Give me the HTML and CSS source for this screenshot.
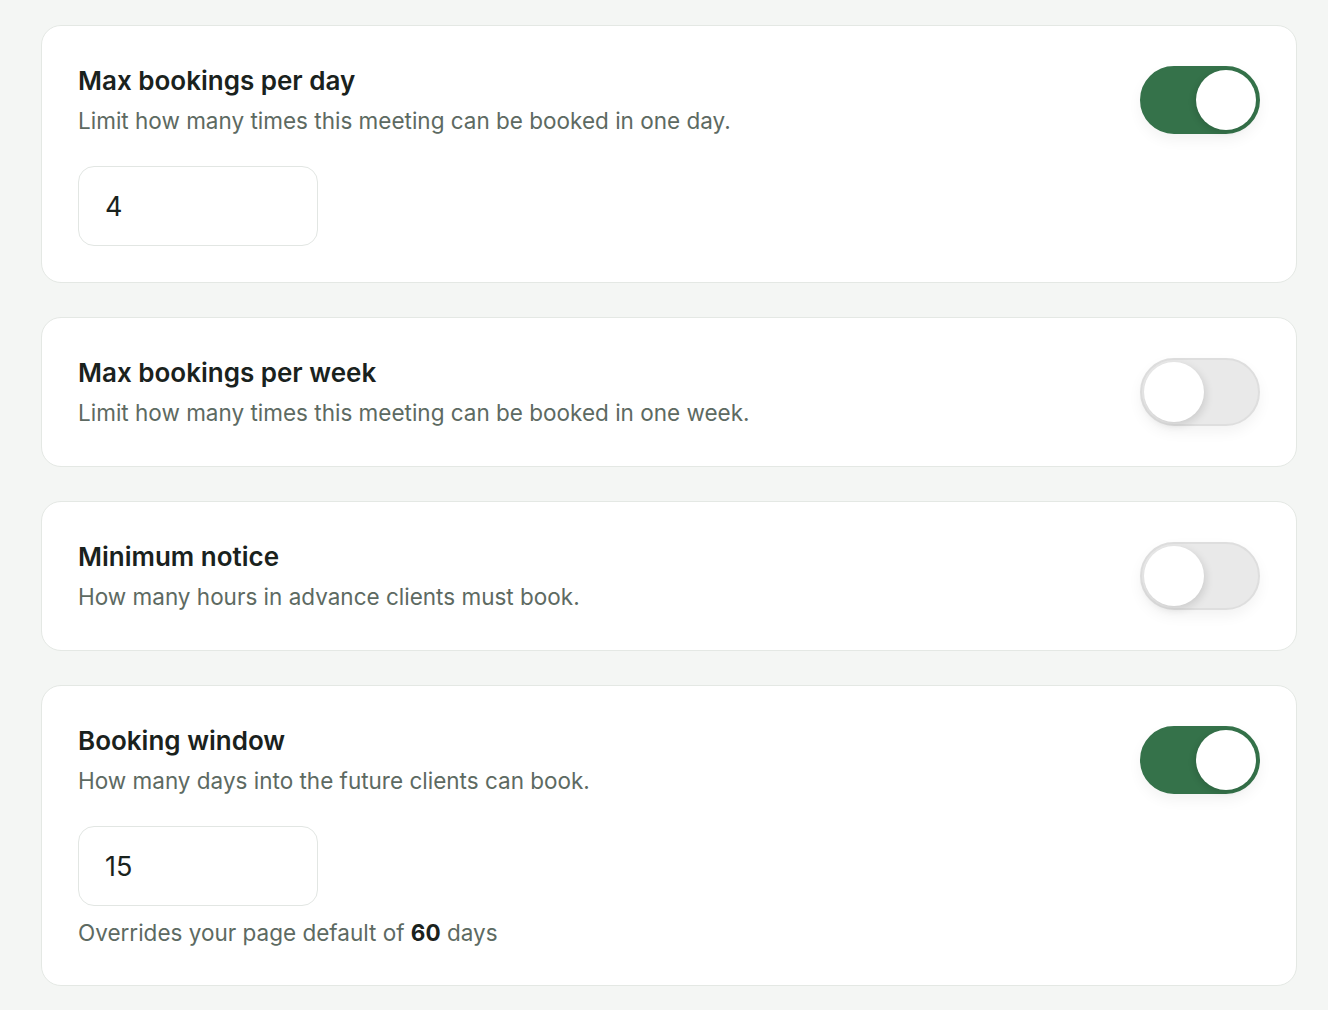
FILE: index.html
```html
<!DOCTYPE html>
<html>

<head>
    <meta charset="utf-8">
    <meta name="viewport" content="width=device-width, initial-scale=1.0">
    <title>Booking limits</title>
    <link rel="stylesheet" href="styles.css">
</head>

<body>
    <div class="settings">
        <div class="card">
            <div class="card-head">
                <div class="card-text">
                    <h2>Max bookings per day</h2>
                    <p class="desc">Limit how many times this meeting can be booked in one day.</p>
                </div>
                <span class="toggle on"><span class="knob"></span></span>
            </div>
            <input class="num" type="text" value="4">
        </div>

        <div class="card">
            <div class="card-head">
                <div class="card-text">
                    <h2>Max bookings per week</h2>
                    <p class="desc">Limit how many times this meeting can be booked in one week.</p>
                </div>
                <span class="toggle"><span class="knob"></span></span>
            </div>
        </div>

        <div class="card">
            <div class="card-head">
                <div class="card-text">
                    <h2>Minimum notice</h2>
                    <p class="desc">How many hours in advance clients must book.</p>
                </div>
                <span class="toggle"><span class="knob"></span></span>
            </div>
        </div>

        <div class="card">
            <div class="card-head">
                <div class="card-text">
                    <h2>Booking window</h2>
                    <p class="desc">How many days into the future clients can book.</p>
                </div>
                <span class="toggle on"><span class="knob"></span></span>
            </div>
            <input class="num" type="text" value="15">
            <p class="note">Overrides your page default of <b>60</b> days</p>
        </div>
    </div>
</body>

</html>
```

FILE: styles.css
```css
body {
    font-family: Inter, "Noto Sans", sans-serif;
    color: #1a221d;
    background-color: #f4f6f4;
    margin: 0;
}

.settings {
    width: 1256px;
    margin-left: 41px;
    padding-top: 25px;
    display: flex;
    flex-direction: column;
    gap: 34px;
}

.card {
    background: #ffffff;
    border: 1px solid #e4e8e4;
    border-radius: 20px;
    padding: 36px;
}

.card-head {
    display: flex;
    justify-content: space-between;
    align-items: flex-start;
}

h2 {
    font-size: 26px;
    line-height: 38px;
    font-weight: 600;
    margin: 0;
}

.desc,
.note {
    font-size: 22.5px;
    line-height: 35px;
    color: #5d6a62;
    margin: 3px 0 0;
}

.note {
    line-height: 32px;
    margin-top: 11px;
}

.note b {
    color: #1a221d;
    font-weight: 700;
}

input.num {
    display: block;
    box-sizing: border-box;
    width: 240px;
    height: 80px;
    margin-top: 28px;
    padding: 0 26px;
    border: 1px solid #e2e6e3;
    border-radius: 16px;
    font-family: inherit;
    font-size: 27px;
    color: #1a221d;
    background: #ffffff;
    outline: none;
}

/* switch */
.toggle {
    margin-top: 4px;
    width: 120px;
    height: 68px;
    box-sizing: border-box;
    border-radius: 34px;
    background: #e9e9e9;
    border: 2px solid #dedede;
    display: flex;
    align-items: center;
    padding: 0 2px;
    box-shadow: 0 6px 14px rgba(0, 0, 0, 0.05);
    flex-shrink: 0;
}

.toggle .knob {
    width: 60px;
    height: 60px;
    border-radius: 50%;
    background: #ffffff;
    box-shadow: 2px 3px 8px rgba(0, 0, 0, 0.12);
}

.toggle.on {
    background: #35724a;
    border-color: #35724a;
    justify-content: flex-end;
}

.toggle.on .knob {
    box-shadow: -2px 2px 6px rgba(0, 0, 0, 0.12);
}
```
